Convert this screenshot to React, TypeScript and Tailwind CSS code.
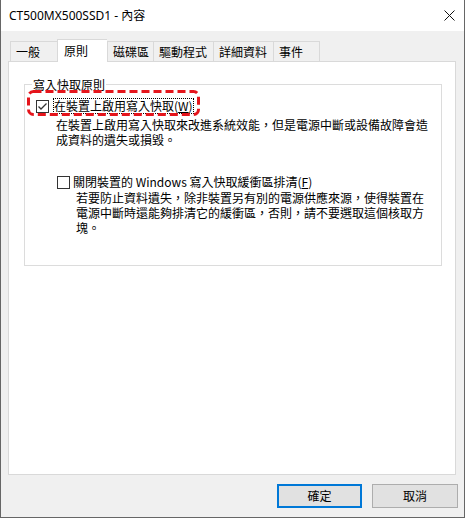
import React from "react";

const cjk = { fontFamily: '"Noto Sans CJK TC", "Noto Sans", sans-serif' };

function Tab({ label, w, selected, last }: { label: string; w: number; selected?: boolean; last?: boolean }) {
  if (selected) {
    return (
      <div
        className="h-[23px] bg-white border-l border-t border-[#d9d9d9] flex items-center pl-[6px] text-[12px] leading-[14px] text-black"
        style={{ width: w }}
      >
        <span className="-mt-[1px]">{label}</span>
      </div>
    );
  }
  return (
    <div
      className={`h-[21px] bg-[#f0f0f0] border-l border-t border-b border-[#d9d9d9] flex items-center pl-[5px] text-[12px] leading-[14px] text-black ${last ? "border-r" : ""}`}
      style={{ width: w }}
    >
      <span className="mt-[1px]">{label}</span>
    </div>
  );
}

function CheckBox({ checked }: { checked?: boolean }) {
  return (
    <div className="w-[13px] h-[13px] border border-[#333333] bg-white flex items-center justify-center shrink-0">
      {checked && (
        <svg width="11" height="11" viewBox="0 0 11 11">
          <polyline points="1.5,5.5 4,8 9.5,2.5" fill="none" stroke="#333333" strokeWidth="1.3" />
        </svg>
      )}
    </div>
  );
}

export default function App() {
  return (
    <div
      className="w-[465px] h-[518px] border-l border-r border-b border-[#666666] bg-[#f0f0f0] flex flex-col text-black"
      style={cjk}
    >
      {/* Title bar */}
      <div className="h-[31px] bg-white flex items-center justify-between pl-[8px] pr-[9px] shrink-0">
        <span className="text-[12px] leading-[16px]" style={{ fontFamily: '"Noto Sans", "Noto Sans CJK TC", sans-serif' }}>
          CT500MX500SSD1 - 內容
        </span>
        <svg width="11" height="11" viewBox="0 0 11 11">
          <line x1="0.5" y1="0.5" x2="10.5" y2="10.5" stroke="#111" strokeWidth="1" />
          <line x1="10.5" y1="0.5" x2="0.5" y2="10.5" stroke="#111" strokeWidth="1" />
        </svg>
      </div>

      {/* Body */}
      <div className="pt-[8px] pl-[7px] flex flex-col">
        <div className="ml-[2px] h-[23px] flex items-end relative z-10 -mb-[1px]">
          <Tab label="一般" w={47} />
          <Tab label="原則" w={50} selected />
          <Tab label="磁碟區" w={46} />
          <Tab label="驅動程式" w={60} />
          <Tab label="詳細資料" w={60} />
          <Tab label="事件" w={47} last />
        </div>

        <div className="w-[448px] h-[414px] border border-[#d9d9d9] bg-white">
          <fieldset className="ml-[15px] mt-[15px] w-[418px] h-[189px] border border-[#dcdcdc]">
            <legend className="ml-[7px] px-[1px] text-[12px] leading-[15px]">寫入快取原則</legend>

            <div className="relative mt-[6px] h-[16px] flex items-center">
              <svg
                className="absolute left-[2px] -top-[8px]"
                width="173"
                height="26"
                viewBox="0 0 173 26"
              >
                <rect
                  x="1.5"
                  y="1.5"
                  width="170"
                  height="23"
                  rx="5"
                  ry="5"
                  fill="none"
                  stroke="#e5141b"
                  strokeWidth="3"
                  strokeDasharray="8 4"
                />
              </svg>
              <div className="ml-[11px]">
                <CheckBox checked />
              </div>
              <div className="ml-[4px] h-[16px] border border-dotted border-black flex items-center text-[12px] leading-[14px]">
                在裝置上啟用寫入快取(<span className="underline underline-offset-1">W</span>)
              </div>
            </div>

            <div className="mt-[3px] pl-[31px] text-[12px] leading-[15px]">
              在裝置上啟用寫入快取來改進系統效能，但是電源中斷或設備故障會造
              <br />
              成資料的遺失或損毀。
            </div>

            <div className="mt-[27px] h-[16px] flex items-center">
              <div className="ml-[32px]">
                <CheckBox />
              </div>
              <div className="ml-[2px] h-[16px] border border-transparent flex items-center text-[12px] leading-[14px]">
                關閉裝置的 Windows 寫入快取緩衝區排清(<span className="underline underline-offset-1">F</span>)
              </div>
            </div>

            <div className="mt-[0px] pl-[51px] text-[12px] leading-[15px]">
              若要防止資料遺失，除非裝置另有別的電源供應來源，使得裝置在
              <br />
              電源中斷時還能夠排清它的緩衝區，否則，請不要選取這個核取方
              <br />
              塊。
            </div>
          </fieldset>
        </div>

        <div className="mt-[9px] flex justify-end gap-[10px] pr-[6px]">
          <button className="w-[85px] h-[24px] border-2 border-[#0078d7] bg-[#e1e1e1] text-[12px] leading-[14px] flex items-center justify-center">
            確定
          </button>
          <button className="w-[86px] h-[24px] border border-[#adadad] bg-[#e1e1e1] text-[12px] leading-[14px] flex items-center justify-center">
            取消
          </button>
        </div>
      </div>
    </div>
  );
}
